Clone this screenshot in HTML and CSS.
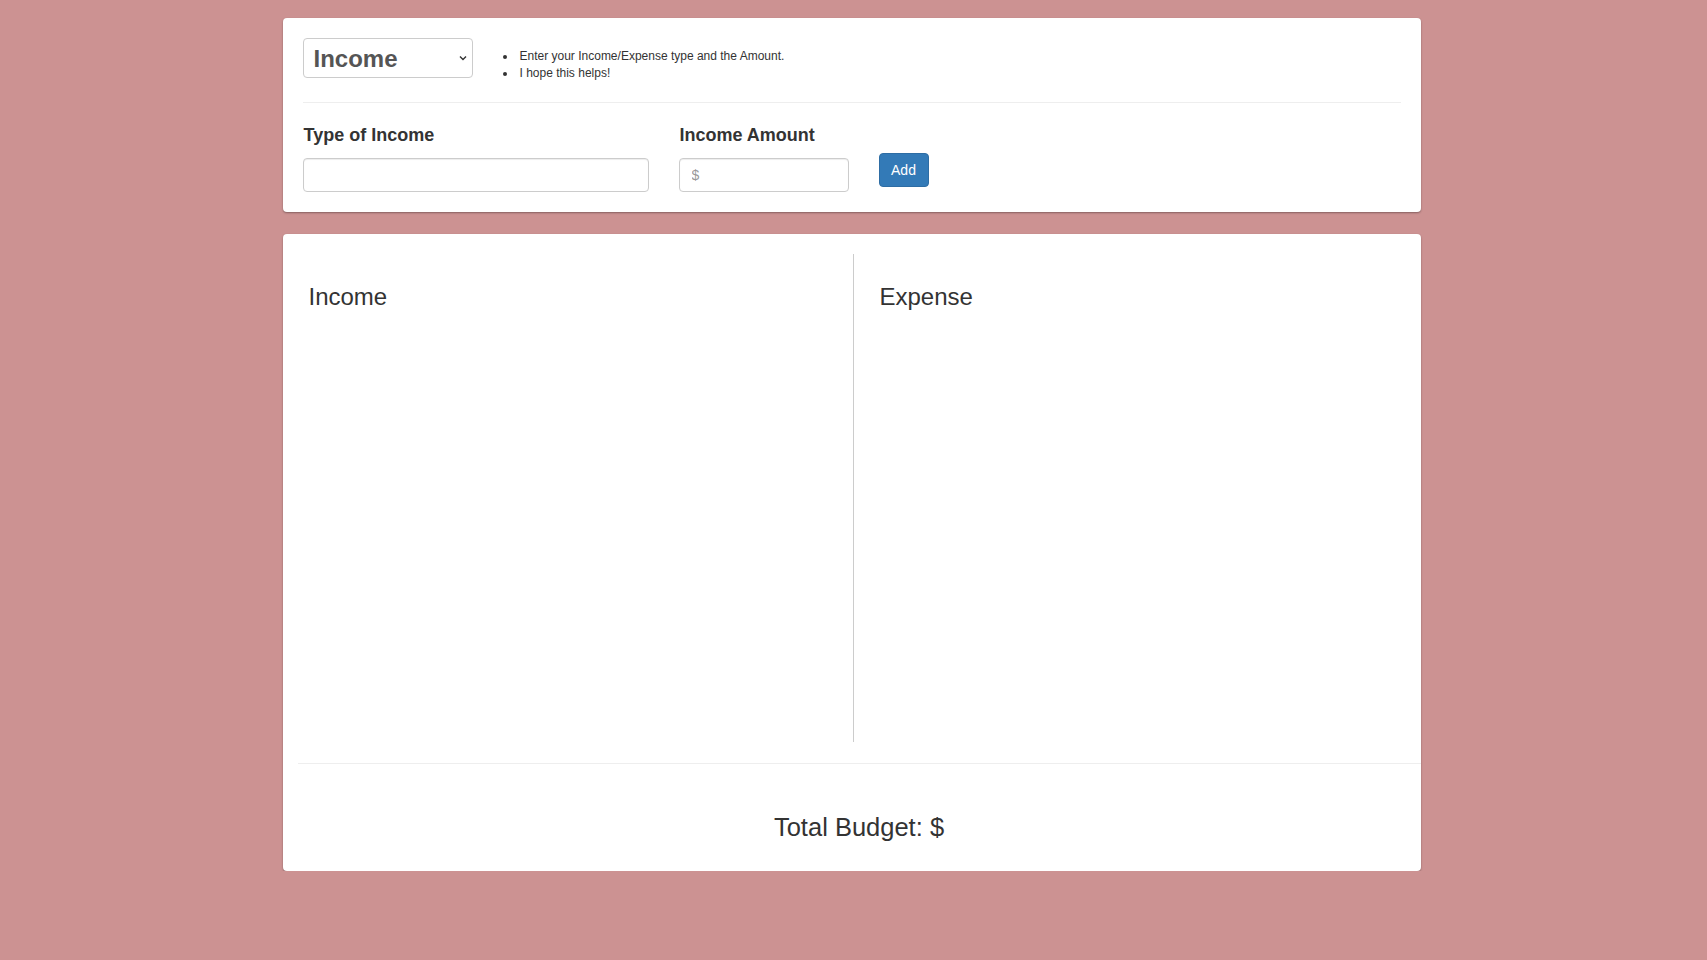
FILE: index.html
```html
<!DOCTYPE html>
<html lang="en">
<head>
<meta charset="utf-8">
<title>Budget</title>
<link rel="stylesheet" href="styles.css">
</head>
<body>
<div class="page">
  <section class="card card-input">
    <div class="top-row">
      <div class="select-wrap">
        <select class="type-select">
          <option>Income</option>
          <option>Expense</option>
        </select>
        <svg class="chev" width="8" height="6" viewBox="0 0 8 6"><polyline points="1,1.5 4,4.5 7,1.5" fill="none" stroke="#333" stroke-width="1.4"/></svg>
      </div>
      <ul class="tips">
        <li>Enter your Income/Expense type and the Amount.</li>
        <li>I hope this helps!</li>
      </ul>
    </div>
    <hr class="rule">
    <div class="form-row">
      <div class="field field-type">
        <label>Type of Income</label>
        <input type="text" class="control">
      </div>
      <div class="field field-amount">
        <label>Income Amount</label>
        <input type="text" class="control" placeholder="$">
      </div>
      <button class="btn-add">Add</button>
    </div>
  </section>

  <section class="card card-lists">
    <div class="cols">
      <div class="col col-left">
        <h3 class="col-title">Income</h3>
      </div>
      <div class="col col-right">
        <h3 class="col-title">Expense</h3>
      </div>
    </div>
    <hr class="rule rule-wide">
    <div class="total">Total Budget: $</div>
  </section>
</div>
</body>
</html>
```

FILE: styles.css
```css
* { box-sizing: border-box; }
html, body { margin: 0; padding: 0; }
body {
  background: #cc9292;
  font-family: "Liberation Sans", Arial, sans-serif;
  color: #333;
  font-size: 14px;
}
.page {
  width: 1138px;
  margin-left: calc(50% - 571px);
  padding-top: 18px;
}
.card {
  background: #fff;
  border-radius: 4px;
  box-shadow: 0 1px 2px rgba(0,0,0,0.35);
}
.card-input {
  padding: 20px 20px 20px 20px;
}
.top-row {
  display: flex;
  align-items: flex-start;
  height: 44px;
}
.select-wrap {
  position: relative;
  width: 170px;
  height: 40px;
}
.type-select {
  -webkit-appearance: none;
  appearance: none;
  width: 170px;
  height: 40px;
  border: 1px solid #ccc;
  border-radius: 4px;
  background: #fff;
  font-family: "Liberation Sans", Arial, sans-serif;
  font-size: 24px;
  font-weight: bold;
  color: #555;
  padding: 0 0 0 10px;
  margin: 0;
}
.chev {
  position: absolute;
  right: 6px;
  top: 17px;
}
.tips {
  margin: 10px 0 0 7px;
  padding-left: 37px;
  font-size: 12px;
  line-height: 17px;
  color: #333;
}
.tips li { padding-left: 3px; }
.rule {
  border: 0;
  border-top: 1px solid #eee;
  margin: 20px 0 0 0;
  height: 0;
}
.form-row {
  display: flex;
  align-items: flex-end;
  gap: 30px;
  margin-top: 21px;
}
.field label {
  display: block;
  font-size: 18px;
  font-weight: bold;
  line-height: 20px;
  padding: 1px 0 0 1px;
  margin-bottom: 13px;
  color: #333;
}
.field-type { width: 346px; }
.field-amount { width: 170px; }
.control {
  display: block;
  width: 100%;
  height: 34px;
  border: 1px solid #ccc;
  border-radius: 4px;
  padding: 6px 12px;
  font-family: "Liberation Sans", Arial, sans-serif;
  font-size: 14px;
  color: #555;
  box-shadow: inset 0 1px 1px rgba(0,0,0,0.075);
  margin: 0;
}
.control::placeholder { color: #999; }
.btn-add {
  height: 34px;
  width: 50px;
  padding: 6px 0;
  margin-bottom: 5px;
  background: #337ab7;
  border: 1px solid #2e6da4;
  border-radius: 4px;
  color: #fff;
  font-family: "Liberation Sans", Arial, sans-serif;
  font-size: 14px;
  line-height: 20px;
}
.card-lists {
  margin-top: 22px;
  padding: 20px 0 0 15px;
}
.cols {
  display: grid;
  grid-template-columns: 555px 1fr;
  height: 488px;
}
.col-left { padding-left: 11px; }
.col-right {
  border-left: 1px solid #ccc;
  padding-left: 26px;
}
.col-title {
  margin: 30px 0 0 0;
  font-size: 24px;
  font-weight: normal;
  line-height: 26px;
  color: #333;
}
.rule-wide { margin-top: 21px; }
.total {
  text-align: center;
  font-size: 25.5px;
  line-height: 28px;
  padding: 49px 0 30px 0;
  color: #333;
}
```
